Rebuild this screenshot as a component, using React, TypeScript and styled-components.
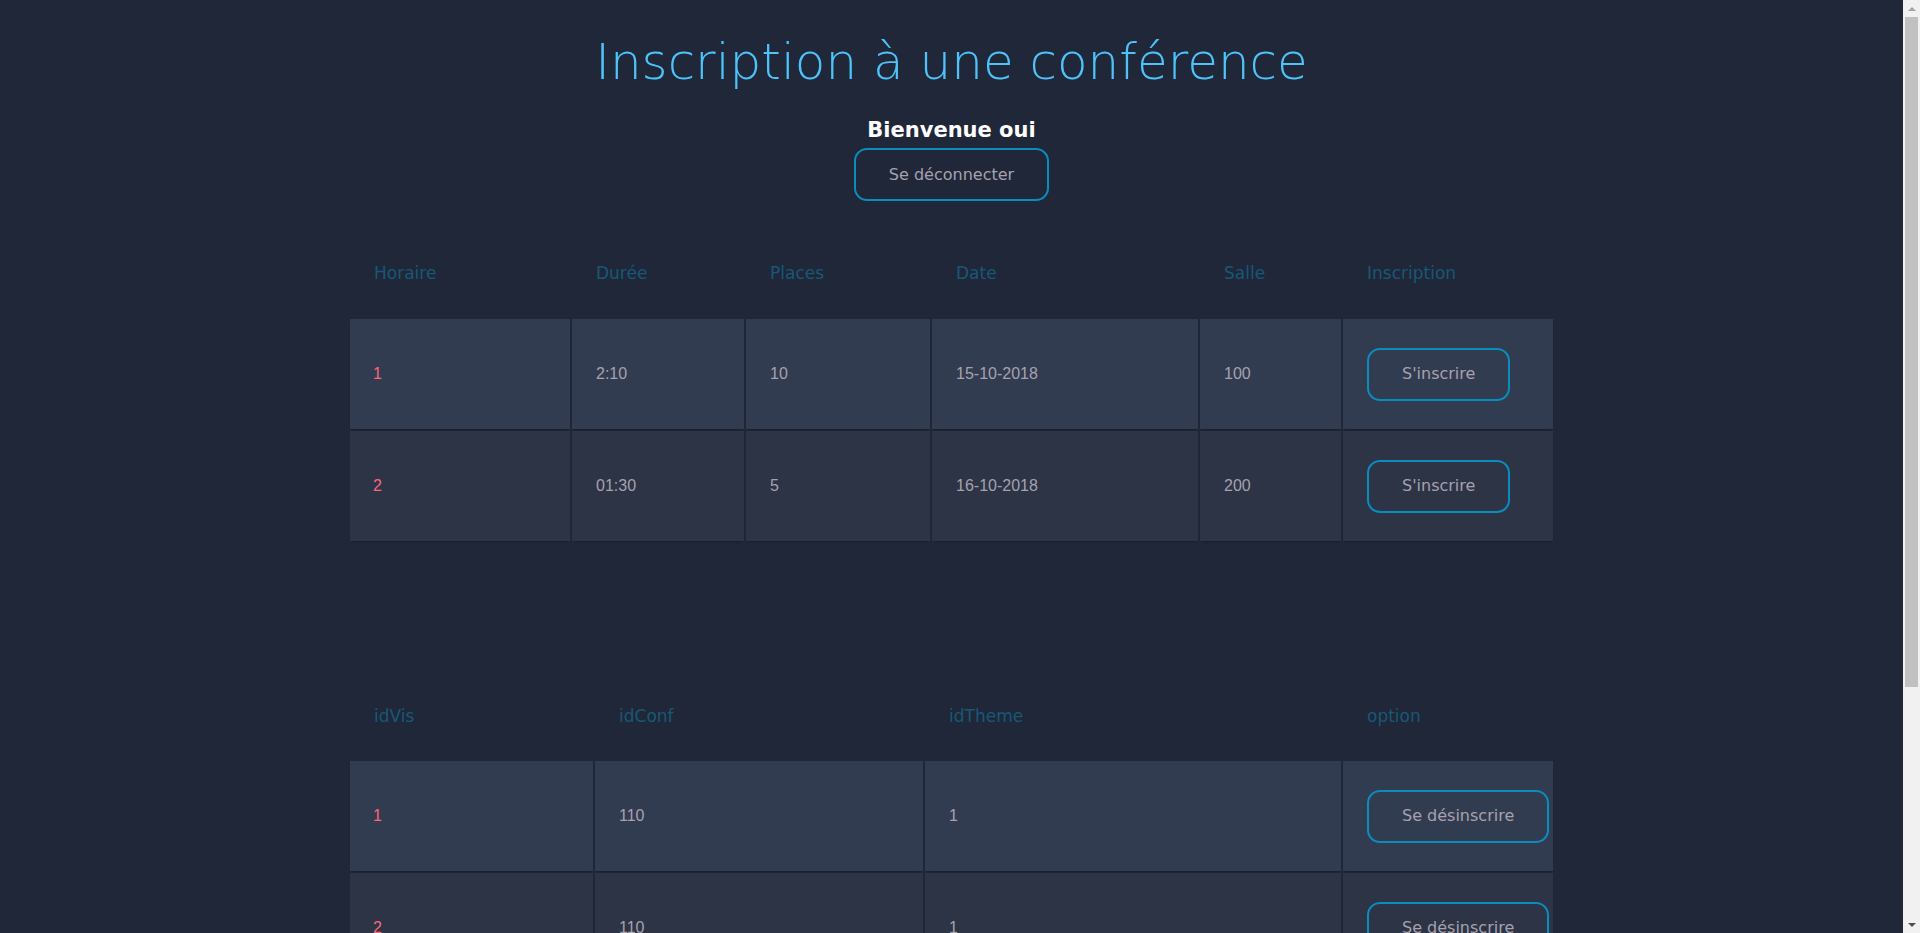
import React from "react";
import styled, { createGlobalStyle } from "styled-components";

const GlobalStyle = createGlobalStyle`
  html, body {
    margin: 0;
    padding: 0;
    background: #1f2739;
  }
  body {
    font-family: "DejaVu Sans", "Liberation Sans", sans-serif;
    color: #a7a1ae;
  }
  *, *::before, *::after { box-sizing: border-box; }
`;

const Page = styled.div`
  min-height: 1252px;
  padding: 32px 17px 0 0;
  display: flex;
  flex-direction: column;
  align-items: center;
`;

/* replica of the browser's classic scrollbar seen in the screenshot */
const ScrollTrack = styled.div`
  position: fixed;
  top: 0;
  right: 0;
  bottom: 0;
  width: 17px;
  background: #f1f1f1;
  display: flex;
  flex-direction: column;
  align-items: center;
`;

const ScrollArrow = styled.div<{ $down?: boolean }>`
  height: 17px;
  width: 17px;
  display: flex;
  align-items: center;
  justify-content: center;
  &::before {
    content: "";
    border-left: 4px solid transparent;
    border-right: 4px solid transparent;
    ${(p) =>
      p.$down
        ? "border-top: 4px solid #505050;"
        : "border-bottom: 4px solid #a3a3a3;"}
  }
`;

const ScrollSpace = styled.div`
  flex: 1;
  width: 100%;
  display: flex;
  justify-content: center;
`;

const ScrollThumb = styled.div`
  width: 13px;
  height: 670px;
  background: #c1c1c1;
`;

const Title = styled.h1`
  margin: 0;
  font-family: "DejaVu Sans", sans-serif;
  font-weight: 200;
  font-size: 50px;
  line-height: 60px;
  color: #4dc3fa;
  text-align: center;
`;

const Welcome = styled.h2`
  margin: 25px 0 0;
  font-family: "DejaVu Sans", sans-serif;
  font-weight: 700;
  font-size: 21px;
  line-height: 26px;
  color: #ffffff;
  text-align: center;
`;

const OutlineButton = styled.button<{ $top?: number }>`
  margin-top: ${(p) => p.$top ?? 0}px;
  height: 53px;
  padding: 0 33px;
  border: 2px solid #0a8cbf;
  border-radius: 13px;
  background: transparent;
  color: #a7a1ae;
  font-family: "DejaVu Sans", sans-serif;
  font-size: 16px;
  line-height: 20px;
  white-space: nowrap;
  cursor: pointer;
`;

const Table = styled.table<{ $top: number }>`
  margin-top: ${(p) => p.$top}px;
  width: 1207px;
  table-layout: fixed;
  border-collapse: separate;
  border-spacing: 2px;
  text-align: left;
`;

const Col = styled.col<{ $w: number }>`
  width: ${(p) => p.$w}px;
`;

const HeadCell = styled.th<{ $pt: number; $pb: number }>`
  padding: ${(p) => p.$pt}px 0 ${(p) => p.$pb}px 24px;
  background: #1f2739;
  font-family: "DejaVu Sans", sans-serif;
  font-weight: 400;
  font-size: 17px;
  line-height: 20px;
  color: #185875;
  text-align: left;
`;

const Row = styled.tr`
  height: 110px;
  &:nth-child(odd) { background: #323c50; }
  &:nth-child(even) { background: #2c3446; }
`;

const Cell = styled.td`
  padding: 0 0 0 24px;
  vertical-align: middle;
  font-family: "Liberation Sans", sans-serif;
  font-size: 16px;
  line-height: 22px;
  color: #a7a1ae;
  box-shadow: 0 2px 2px -2px #0e1119;
  overflow: hidden;
  white-space: nowrap;
  &:first-child { color: #fb667a; padding-left: 23px; }
`;

const conferences = [
  { horaire: "1", duree: "2:10", places: "10", date: "15-10-2018", salle: "100" },
  { horaire: "2", duree: "01:30", places: "5", date: "16-10-2018", salle: "200" },
];

const inscriptions = [
  { idVis: "1", idConf: "110", idTheme: "1" },
  { idVis: "2", idConf: "110", idTheme: "1" },
];

export default function App() {
  return (
    <>
      <GlobalStyle />
      <Page>
        <Title>Inscription à une conférence</Title>
        <Welcome>Bienvenue oui</Welcome>
        <OutlineButton $top={5}>Se déconnecter</OutlineButton>

        <Table $top={25}>
          <colgroup>
            <Col $w={220} />
            <Col $w={172} />
            <Col $w={184} />
            <Col $w={266} />
            <Col $w={141} />
            <Col $w={210} />
          </colgroup>
          <thead>
            <tr>
              {["Horaire", "Durée", "Places", "Date", "Salle", "Inscription"].map((h) => (
                <HeadCell key={h} $pt={35} $pb={34}>{h}</HeadCell>
              ))}
            </tr>
          </thead>
          <tbody>
            {conferences.map((c) => (
              <Row key={c.horaire}>
                <Cell>{c.horaire}</Cell>
                <Cell>{c.duree}</Cell>
                <Cell>{c.places}</Cell>
                <Cell>{c.date}</Cell>
                <Cell>{c.salle}</Cell>
                <Cell>
                  <OutlineButton>S'inscrire</OutlineButton>
                </Cell>
              </Row>
            ))}
          </tbody>
        </Table>

        <Table $top={128}>
          <colgroup>
            <Col $w={243} />
            <Col $w={328} />
            <Col $w={416} />
            <Col $w={210} />
          </colgroup>
          <thead>
            <tr>
              {["idVis", "idConf", "idTheme", "option"].map((h) => (
                <HeadCell key={h} $pt={33} $pb={33}>{h}</HeadCell>
              ))}
            </tr>
          </thead>
          <tbody>
            {inscriptions.map((r) => (
              <Row key={r.idVis}>
                <Cell>{r.idVis}</Cell>
                <Cell>{r.idConf}</Cell>
                <Cell>{r.idTheme}</Cell>
                <Cell>
                  <OutlineButton>Se désinscrire</OutlineButton>
                </Cell>
              </Row>
            ))}
          </tbody>
        </Table>
      </Page>
      <ScrollTrack aria-hidden="true">
        <ScrollArrow />
        <ScrollSpace>
          <ScrollThumb />
        </ScrollSpace>
        <ScrollArrow $down />
      </ScrollTrack>
    </>
  );
}
